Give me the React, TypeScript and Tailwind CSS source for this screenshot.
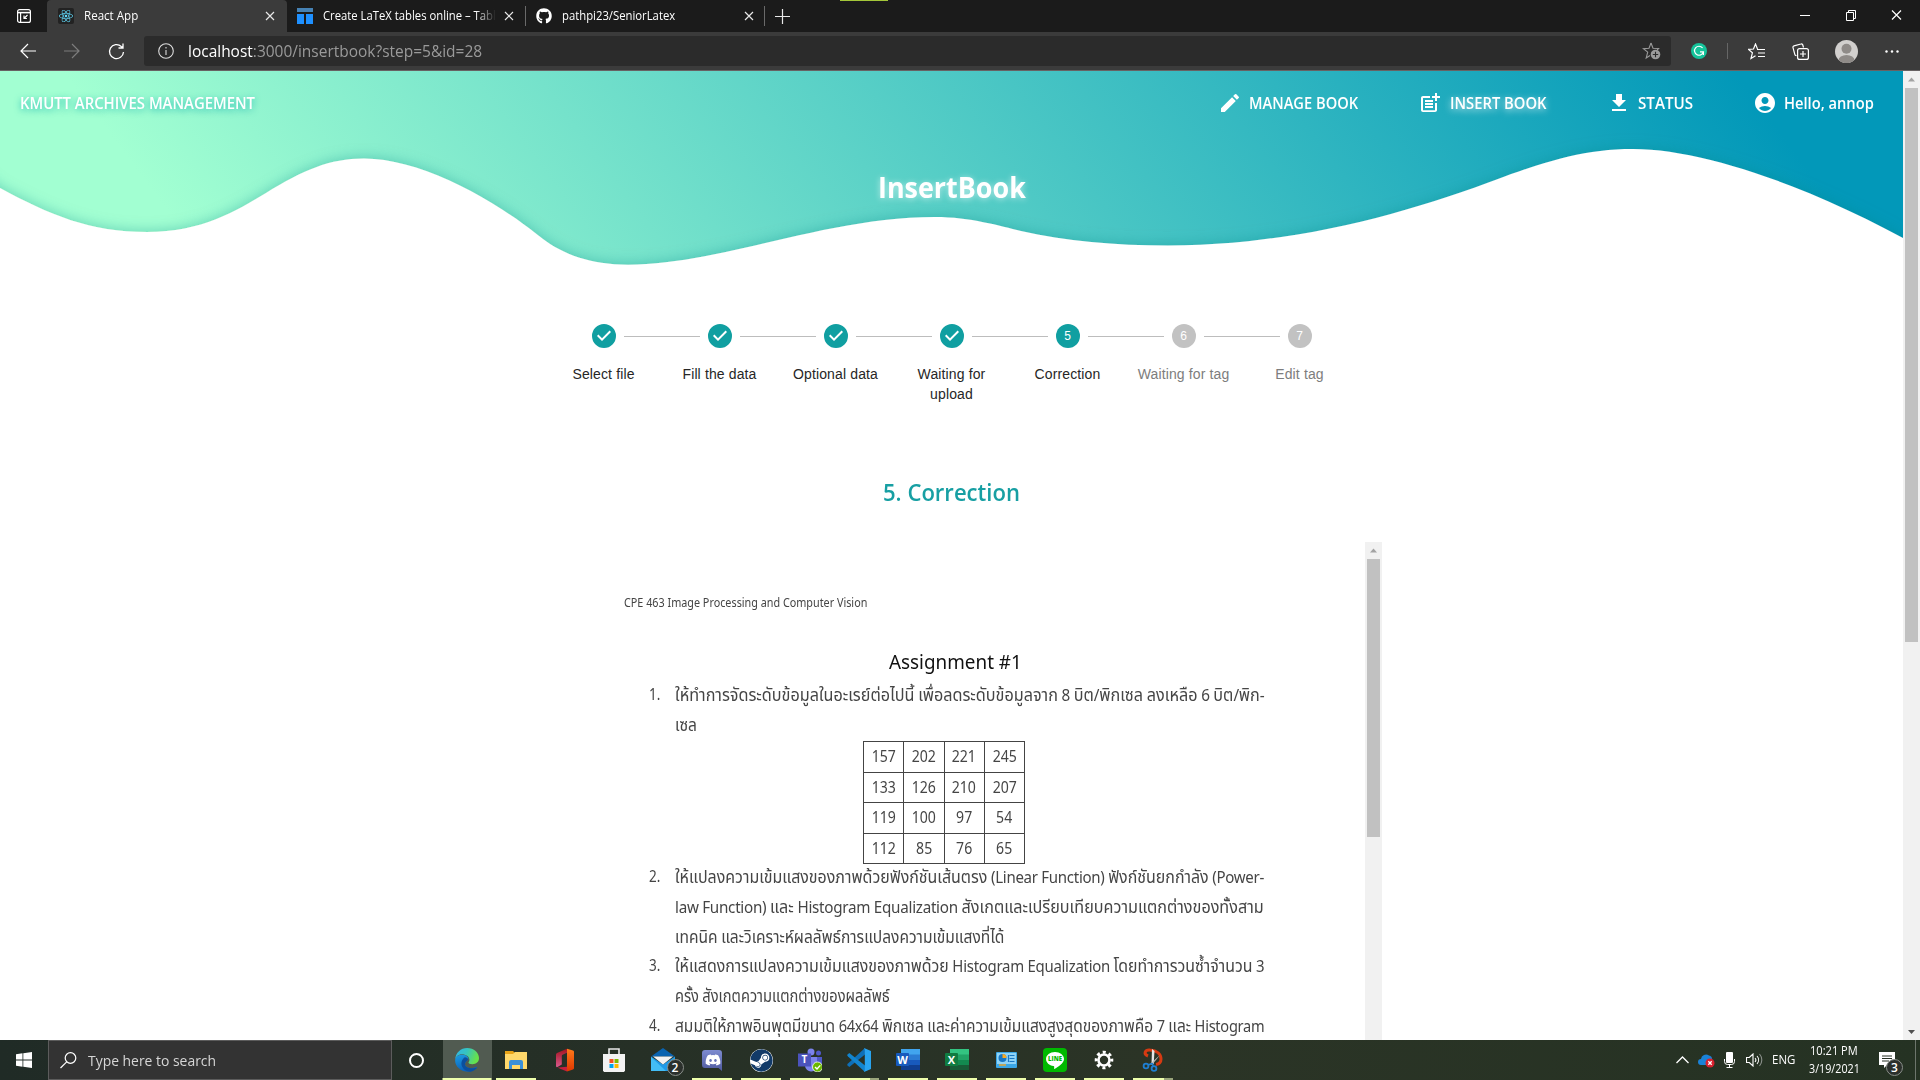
import { useLayoutEffect, useRef, useState } from "react";
import type { ReactNode } from "react";
import { MdEdit, MdPostAdd, MdGetApp, MdAccountCircle } from "react-icons/md";
import { FaGithub, FaReact, FaDiscord, FaSteam } from "react-icons/fa";

/* One line of text stretched to an exact width. */
function Fit({ w, children, className = "" }: { w: number; children: ReactNode; className?: string }) {
  const ref = useRef<HTMLSpanElement>(null);
  const [scale, setScale] = useState(1);
  useLayoutEffect(() => {
    if (ref.current && ref.current.offsetWidth) setScale(w / ref.current.offsetWidth);
  }, [w]);
  return (
    <span className={`block shrink-0 ${className}`} style={{ width: w }}>
      <span ref={ref} className="inline-block origin-left whitespace-nowrap" style={{ transform: `scaleX(${scale})` }}>
        {children}
      </span>
    </span>
  );
}

function Close({ className = "" }: { className?: string }) {
  return (
    <svg className={`h-[10px] w-[10px] shrink-0 ${className}`} viewBox="0 0 10 10" stroke="#e8e8e8" strokeWidth="1.2">
      <path d="M1 1l8 8M9 1l-8 8" />
    </svg>
  );
}

function TabStrip() {
  return (
    <div className="flex h-8 items-center bg-[#1b1b1b] text-[12px] leading-8 text-white">
      <svg className="ml-4 h-4 w-4 shrink-0" viewBox="0 0 16 16" fill="none" stroke="#fff" strokeWidth="1.2">
        <rect x="1.6" y="1.6" width="12.8" height="12.8" rx="2" />
        <path d="M1.6 4.6h12.8" strokeWidth="1.6" />
        <path d="M4.6 4v10" />
        <path d="M11.5 7L8 10.5M8 7.6v2.9h2.9" />
      </svg>
      <div className="ml-[15px] flex h-8 w-[240px] items-center rounded-t-[4px] bg-[#3b3b3b]">
        <span className="ml-[11px] flex h-4 w-4 items-center justify-center rounded-[2px] bg-[#222]">
          <FaReact className="h-[14px] w-[14px] text-[#61dafb]" />
        </span>
        <Fit w={54} className="ml-[10px]">React App</Fit>
        <Close className="ml-[127px]" />
      </div>
      <svg className="ml-[10px] h-4 w-4 shrink-0" viewBox="0 0 16 16">
        <path fill="#4682b4" d="M0 0h16v4H0z" />
        <path fill="#1e90ff" d="M0 6h7v10H0zM9 6h7v10H9z" />
      </svg>
      <div className="relative ml-[10px] w-[173px] overflow-hidden">
        <Fit w={173}>Create LaTeX tables online – Tabl</Fit>
        <span className="absolute inset-y-0 right-0 w-5 bg-linear-to-r from-transparent to-[#1b1b1b]" />
      </div>
      <Close className="ml-[8px]" />
      <span className="ml-[11px] h-5 w-px bg-[#6a6a6a]" />
      <FaGithub className="ml-[10px] h-4 w-4 shrink-0" />
      <Fit w={113} className="ml-[10px]">pathpi23/SeniorLatex</Fit>
      <Close className="ml-[69px]" />
      <span className="ml-[10px] h-5 w-px bg-[#6a6a6a]" />
      <svg className="ml-[10px] h-[15px] w-[15px]" viewBox="0 0 15 15" stroke="#e8e8e8" strokeWidth="1.2">
        <path d="M7.5 0v15M0 7.5h15" />
      </svg>
      <span className="ml-[50px] h-[1px] w-12 self-start bg-[#a4c639]" />
      <svg className="mr-[17px] mb-[3px] ml-auto h-[12px] w-[104px]" viewBox="0 0 104 12" fill="none" stroke="#fff" strokeWidth="1">
        <path d="M1 6.5h10" />
        <path d="M47.500 3.500h7v8h-7zM49.500 3.500v-2h7v8h-2" />
        <path d="M93 1.500l9 9M102 1.500l-9 9" strokeWidth="1.2" />
      </svg>
    </div>
  );
}

function Toolbar() {
  return (
    <div className="flex h-[39px] items-center border-b border-[#676263] bg-[#3b3b3b]">
      <svg className="ml-5 h-4 w-4 shrink-0" viewBox="0 0 16 16" fill="none" stroke="#fff" strokeWidth="1.2">
        <path d="M16 8H1M8 1L1 8l7 7" />
      </svg>
      <svg className="ml-7 h-4 w-4 shrink-0" viewBox="0 0 16 16" fill="none" stroke="#7d7d7d" strokeWidth="1.2">
        <path d="M0 8h15M8 1l7 7-7 7" />
      </svg>
      <svg className="ml-7 h-[17px] w-[17px] shrink-0" viewBox="0 0 17 17" fill="none" stroke="#fff" strokeWidth="1.3">
        <path d="M15.500 9a7 7 0 1 1-2.200-5.500L15 5M15 0.500V5h-4.500" />
      </svg>
      <div className="ml-[19px] flex h-[30px] w-[1527px] items-center rounded-[3px] bg-[#2b2b2b] text-[16px] leading-[30px]">
        <svg className="ml-[14px] h-4 w-4 shrink-0" viewBox="0 0 16 16" fill="none" stroke="#ddd" strokeWidth="1.1">
          <circle cx="8" cy="8" r="7.300" />
          <path d="M8 7v5M8 4v1.500" />
        </svg>
        <Fit w={294} className="ml-[14px] text-[#9a9a9a]">
          <span className="text-white">localhost</span>:3000/insertbook?step=5&amp;id=28
        </Fit>
        <svg className="ml-auto mr-[10px] h-[18px] w-[19px] shrink-0" viewBox="0 0 19 18" fill="none" stroke="#9a9a9a" strokeWidth="1.1">
          <path d="M9 1l2 5.200 5.600.3-1.500 1.500M9 1L7 6.200l-5.600.4 4.300 3.600L4.200 16 8 13.500" />
          <circle cx="13.500" cy="12.500" r="4.800" fill="#9a9a9a" stroke="none" />
          <path d="M13.500 9.800v5.400M10.800 12.500h5.400" stroke="#2b2b2b" />
        </svg>
      </div>
      <svg className="ml-5 h-4 w-4 shrink-0" viewBox="0 0 16 16" fill="none" stroke="#fff" strokeWidth="1.200">
        <circle cx="8" cy="8" r="8" fill="#15c39a" stroke="none" />
        <path d="M11.600 5A4.500 4.500 0 1 0 12.400 8.800H9M12.400 8.800V12" />
      </svg>
      <span className="ml-5 h-4 w-px bg-[#666]" />
      <svg className="ml-5 h-[17px] w-[17px] shrink-0" viewBox="0 0 17 17" fill="none" stroke="#fff" strokeWidth="1.200">
        <path d="M9.500 6L7.500 1 5.500 6l-5 .4 3.900 3.400L3 15.500l4.500-2.800M9 6.500h8M10 10h7M10 13.500h7" />
      </svg>
      <svg className="ml-[27px] h-[17px] w-[17px] shrink-0" viewBox="0 0 17 17" fill="none" stroke="#fff" strokeWidth="1.200">
        <path d="M11.500 4.500L10.800 2a1.500 1.500 0 0 0-1.900-1L2 2.900A1.500 1.500 0 0 0 1 4.700l1.800 6.700a1.500 1.500 0 0 0 1.700 1.100" />
        <rect x="5.600" y="5.600" width="10.800" height="10.800" rx="2" />
        <path d="M11 8v6M8 11h6" />
      </svg>
      <svg className="ml-[26px] h-[23px] w-[23px] shrink-0" viewBox="0 0 23 23">
        <clipPath id="avatar"><circle cx="11.500" cy="11.500" r="11.500" /></clipPath>
        <g clipPath="url(#avatar)">
          <path fill="#d2d0ce" d="M0 0h23v23H0z" />
          <circle cx="11.500" cy="8.800" r="5" fill="#8f8b88" />
          <ellipse cx="11.500" cy="20.500" rx="8" ry="5.500" fill="#8f8b88" />
        </g>
      </svg>
      <svg className="ml-[27px] h-[3px] w-[14px]" viewBox="0 0 14 3" fill="#fff">
        <circle cx="1.500" cy="1.500" r="1.200" /><circle cx="7" cy="1.500" r="1.200" /><circle cx="12.500" cy="1.500" r="1.200" />
      </svg>
    </div>
  );
}

function Waves() {
  return (
    <svg className="absolute inset-x-0 top-0 h-[230px] w-[1903px]" viewBox="0 71 1903 230">
      <defs>
        <linearGradient id="sea" gradientUnits="userSpaceOnUse" x1="5.6" y1="-4.2" x2="1076" y2="-807">
          <stop offset="0" stopColor="#a2ffd2" />
          <stop offset="1" stopColor="#0298b9" />
        </linearGradient>
        <filter id="shade" x="-5%" y="-30%" width="110%" height="160%">
          <feDropShadow dx="0" dy="-1" stdDeviation="7" floodColor="#108888" floodOpacity="0.36" />
        </filter>
      </defs>
      <path fill="url(#sea)" d="M0 71h1903v230H0z" />
      <path
        filter="url(#shade)"
        fill="#fff"
        d="M-60 140L0 188C50 215 90 232 147 232C202 232 236 211 266 193C303 170 330 158.500 364 158.500C420 158.500 493 198 543 239C563 254 590 264.700 628 264.700C720 264.700 825 217 935 217C970 217 1000 226 1021 231C1065 241 1115 245.500 1168 245.500C1290 245.500 1400 215 1487 183C1543 162 1583 149 1633 149C1702 149 1805 185 1903 238L1970 280V340H-60z"
      />
    </svg>
  );
}

const navText = "text-[16px] font-semibold leading-6 text-white";

function NavBar() {
  return (
    <div className="relative flex h-16 items-center text-white">
      <Fit w={235} className={`ml-5 ${navText} [text-shadow:0_2px_8px_#0aac]`}>KMUTT ARCHIVES MANAGEMENT</Fit>
      <MdEdit className="ml-[963px] h-6 w-6 shrink-0" />
      <Fit w={109} className={`ml-[7px] ${navText}`}>MANAGE BOOK</Fit>
      <MdPostAdd className="ml-[60px] h-6 w-6 shrink-0" />
      <Fit w={97} className={`ml-2 ${navText} [text-shadow:0_2px_8px_#fffc]`}>INSERT BOOK</Fit>
      <MdGetApp className="ml-[60px] h-6 w-6 shrink-0" />
      <Fit w={55} className={`ml-[7px] ${navText}`}>STATUS</Fit>
      <MdAccountCircle className="ml-[60px] h-6 w-6 shrink-0" />
      <Fit w={90} className={`ml-[7px] ${navText}`}>Hello, annop</Fit>
    </div>
  );
}

const steps = ["Select file", "Fill the data", "Optional data", "Waiting for upload", "Correction", "Waiting for tag", "Edit tag"];

function Stepper() {
  return (
    <div className="mx-auto flex w-[812px] font-['Liberation_Sans',sans-serif]">
      {steps.map((label, i) => (
        <div key={label} className="relative flex w-[116px] flex-col items-center px-2">
          {i > 0 && <span className="absolute top-3 right-[78px] left-[-38px] h-px bg-[#bdbdbd]" />}
          {i < 4 ? (
            <svg className="h-6 w-6" viewBox="0 0 24 24" fill="#109fa1">
              <path d="M12 0a12 12 0 1 0 0 24 12 12 0 0 0 0-24zm-2 17l-5-5 1.400-1.400 3.600 3.600 7.600-7.600L19 8l-9 9z" />
            </svg>
          ) : (
            <span className={`flex h-6 w-6 items-center justify-center rounded-full text-[12px] leading-none text-white ${i === 4 ? "bg-[#109fa1]" : "bg-[#c2c2c2]"}`}>
              {i + 1}
            </span>
          )}
          <span className={`mt-4 text-center text-[14px] leading-5 tracking-[0.00938em] ${i > 4 ? "text-[#7d7d7d]" : "text-[#262626]"}`}>{label}</span>
        </div>
      ))}
    </div>
  );
}

const grid = [
  ["157", "202", "221", "245"],
  ["133", "126", "210", "207"],
  ["119", "100", "97", "54"],
  ["112", "85", "76", "65"],
];

/* Thai runs are set a size larger than the Latin ones around them. */
function Mixed({ text }: { text: string }) {
  return (
    <>
      {text.split(/([\u0e00-\u0e7f]+)/).map((run, i) =>
        i % 2 ? (
          <span key={i} className="text-[17px]">{run}</span>
        ) : (
          <span key={i} className="tracking-[-0.3px]">{run}</span>
        ),
      )}
    </>
  );
}

function Item({ n, lines }: { n: number; lines: [string, number][] }) {
  return (
    <div className="flex text-[16px] leading-[29.7px]">
      <span className="w-[26px] shrink-0"><Fit w={11}>{n}.</Fit></span>
      <div>
        {lines.map(([text, w]) => (
          <Fit key={text} w={w} className="h-[29.7px]"><Mixed text={text} /></Fit>
        ))}
      </div>
    </div>
  );
}

function Doc() {
  return (
    <div className="flex h-[498px] w-[765px] flex-col overflow-hidden pl-[49px] font-['Noto_Sans','Noto_Sans_Thai','Loma','Garuda',sans-serif] text-[#454545]">
      <Fit w={243} className="mt-[51px] -ml-[25px] text-[12px] leading-5">CPE 463 Image Processing and Computer Vision</Fit>
      <Fit w={133} className="mt-[34px] ml-[240px] text-[19px] leading-[30px] text-[#111]">Assignment #1</Fit>
      <div className="mt-[3px]">
        <Item n={1} lines={[["ให้ทำการจัดระดับข้อมูลในอะเรย์ต่อไปนี้ เพื่อลดระดับข้อมูลจาก 8 บิต/พิกเซล ลงเหลือ 6 บิต/พิก-", 589], ["เซล", 22]]} />
      </div>
      <table className="mt-[2px] ml-[214px] w-[162px] shrink-0 table-fixed border-collapse text-center text-[16px] leading-[28px]">
        <tbody>
          {grid.map((row, r) => (
            <tr key={r} className="h-[30.500px] align-top">
              {row.map((cell, c) => (
                <td key={c} className="border border-[#444] p-0">
                  <span className="inline-block scale-x-[0.88]">{cell}</span>
                </td>
              ))}
            </tr>
          ))}
        </tbody>
      </table>
      <div className="-mt-[2px]">
        <Item
          n={2}
          lines={[
            ["ให้แปลงความเข้มแสงของภาพด้วยฟังก์ชันเส้นตรง (Linear Function) ฟังก์ชันยกกำลัง (Power-", 589],
            ["law Function) และ Histogram Equalization สังเกตและเปรียบเทียบความแตกต่างของทั้งสาม", 589],
            ["เทคนิค และวิเคราะห์ผลลัพธ์การแปลงความเข้มแสงที่ได้", 329],
          ]}
        />
        <Item
          n={3}
          lines={[
            ["ให้แสดงการแปลงความเข้มแสงของภาพด้วย Histogram Equalization โดยทำการวนซ้ำจำนวน 3", 589],
            ["ครั้ง สังเกตความแตกต่างของผลลัพธ์", 215],
          ]}
        />
        <Item n={4} lines={[["สมมติให้ภาพอินพุตมีขนาด 64x64 พิกเซล และค่าความเข้มแสงสูงสุดของภาพคือ 7 และ Histogram", 589]]} />
      </div>
    </div>
  );
}

function Arrow({ down = false, fill }: { down?: boolean; fill: string }) {
  return (
    <svg className="h-[17px] w-[17px] shrink-0" viewBox="0 0 17 17" fill={fill}>
      <path d={down ? "M5 7h7l-3.500 4z" : "M5 10.500h7L8.500 6.500z"} />
    </svg>
  );
}

function Page() {
  return (
    <div className="flex h-[969px] bg-white">
      <div className="relative flex w-[1903px] flex-col">
        <Waves />
        <NavBar />
        <div className="relative flex h-[189px] justify-center pt-[32px] text-white">
          <Fit w={148} className="text-[28px] font-bold leading-[40px] [text-shadow:0_1px_6px_#fff9]">InsertBook</Fit>
        </div>
        <Stepper />
        <div className="mt-[70px] flex justify-center">
          <Fit w={137} className="text-[24px] font-semibold leading-9 text-[#179fa3]">5. Correction</Fit>
        </div>
        <div className="mt-auto ml-[600px] flex h-[498px]">
          <Doc />
          <div className="flex w-[17px] flex-col items-center bg-[#f1f1f1]">
            <Arrow fill="#a3a3a3" />
            <span className="h-[278px] w-[13px] bg-[#c1c1c1]" />
          </div>
        </div>
      </div>
      <div className="flex w-[17px] flex-col items-center bg-[#f1f1f1]">
        <Arrow fill="#a3a3a3" />
        <span className="h-[554px] w-[13px] bg-[#c1c1c1]" />
        <span className="mt-auto"><Arrow down fill="#505050" /></span>
      </div>
    </div>
  );
}

function Slot({ children, bar = "w-10", active = false, more = false }: { children: ReactNode; bar?: string; active?: boolean; more?: boolean }) {
  return (
    <div className={`relative flex h-10 w-[49px] shrink-0 items-center justify-center ${active ? "bg-[#515b51]" : ""}`}>
      {children}
      {bar && (
        <span className={`absolute bottom-0 left-1/2 flex h-[2px] -translate-x-1/2 justify-end bg-[#eeffac] ${bar}`}>
          {more && <span className="h-full w-[9px] bg-[#9aa67c]" />}
        </span>
      )}
    </div>
  );
}

function Badge({ n, className }: { n: number; className: string }) {
  return (
    <span className={`absolute flex h-[17px] w-[17px] items-center justify-center rounded-full border border-[#8a8f8a] bg-[#2b302c] text-[12px] font-semibold leading-none text-white ${className}`}>
      {n}
    </span>
  );
}

function OfficeSheet({ letter, c }: { letter: string; c: [string, string, string, string, string] }) {
  return (
    <span className="relative h-6 w-6">
      <svg className="h-6 w-6" viewBox="0 0 24 24">
        <path fill={c[0]} d="M5 1h19v6H5z" />
        <path fill={c[1]} d="M5 6.500h19V12H5z" />
        <path fill={c[2]} d="M5 12h19v5H5z" />
        <path fill={c[3]} d="M5 17h19v5H5z" />
        <rect y="5" width="13" height="13" rx="1" fill={c[4]} />
      </svg>
      <span className="absolute top-[5px] left-0 w-[13px] text-center text-[11px] font-bold leading-[13px] text-white">{letter}</span>
    </span>
  );
}

function Taskbar() {
  return (
    <div className="flex h-10 items-center bg-linear-to-r from-[#202b26] via-[#2b3426] via-60% to-[#253223] text-white">
      <svg className="ml-4 h-4 w-4 shrink-0" viewBox="0 0 16 16" fill="#fff">
        <path d="M0 2.200l6.500-.9v6.300H0zM7.300 1.200L16 0v7.600H7.300zM0 8.400h6.500v6.300L0 13.800zM7.300 8.400H16V16l-8.700-1.200z" />
      </svg>
      <div className="ml-4 flex h-10 w-[344px] items-center border border-[#5c5c5c] bg-[#333] text-[15px] leading-[38px] text-[#d6d6d6]">
        <svg className="ml-[11px] h-[17px] w-[17px]" viewBox="0 0 17 17" fill="none" stroke="#fff" strokeWidth="1.200">
          <circle cx="10.500" cy="6" r="5.300" /><path d="M6.700 9.800L.5 16" />
        </svg>
        <Fit w={128} className="ml-[11px]">Type here to search</Fit>
      </div>
      <div className="flex w-[50.500px] justify-center pr-[2px]">
        <span className="h-[15px] w-[15px] rounded-full border-2 border-white" />
      </div>
      <Slot active bar="w-[49px]">
        <svg className="h-6 w-6" viewBox="0 0 256 256">
          <defs>
            <linearGradient id="e1" x1="0" x2="1" y1="0" y2="0.300"><stop offset="0" stopColor="#2fb5ea" /><stop offset="0.500" stopColor="#36c3c0" /><stop offset="1" stopColor="#66e24b" /></linearGradient>
            <linearGradient id="e2" x1="0" x2="0.300" y1="0" y2="1"><stop offset="0" stopColor="#1b9de2" /><stop offset="1" stopColor="#0b5fb8" /></linearGradient>
          </defs>
          <path fill="url(#e2)" d="M3 118c6-34 48-52 86-46 36 6 62 32 52 50-4 8-34 20-34 52 0 28 38 46 76 40 30-4 46-16 52-12 5 4-22 34-60 46C90 272-12 204 3 118z" />
          <path fill="#0c4f9e" d="M105 98c-30 22-46 60-30 98 14 32 48 54 88 56 28-2 60-22 74-44-6-4-22 8-54 8-44 0-76-18-76-44 0-30 30-40 33-50-4-14-16-24-35-24z" />
          <path fill="url(#e1)" d="M3 122C6 50 62 0 130 0c72 0 126 52 126 106 0 42-32 66-70 66-28 0-44-10-42-18 2-6 10-10 10-28 0-36-40-60-80-60-38 0-66 26-71 56z" />
        </svg>
      </Slot>
      <Slot>
        <svg className="h-6 w-6" viewBox="0 0 24 24">
          <path fill="#e8a317" d="M1 3h8l2 2v2H1z" /><path fill="#ffd86b" d="M1 6h8l2-2h12v17H1z" />
          <path fill="#3a8fd8" d="M5 21v-7a2 2 0 0 1 2-2h10a2 2 0 0 1 2 2v7h-3v-4H8v4z" />
        </svg>
      </Slot>
      <Slot bar="">
        <svg className="h-6 w-6" viewBox="0 0 24 24">
          <defs>
            <linearGradient id="o1" x1="0" x2="0" y1="0" y2="1"><stop offset="0" stopColor="#a3131f" /><stop offset="1" stopColor="#d9588c" /></linearGradient>
            <linearGradient id="o2" x1="0" x2="0" y1="0" y2="1"><stop offset="0" stopColor="#ff7a1a" /><stop offset="1" stopColor="#dd3600" /></linearGradient>
          </defs>
          <path fill="url(#o1)" d="M3 6.500Q3 5.500 4 5L14 .800v4L9.500 6.700Q8.800 7 8.800 8v8.500L4.500 19Q3 19.500 3 18z" />
          <path fill="#c41f3e" d="M5 19.500l9-.8v4.800L6 20.300Q5.300 20 5 19.500z" />
          <path fill="url(#o2)" d="M14 .800l6 1.700q1 .3 1 1.300v16.500q0 1-1 1.300l-6 1.900z" />
        </svg>
      </Slot>
      <Slot bar="">
        <svg className="h-6 w-6" viewBox="0 0 24 24">
          <path fill="none" stroke="#e8e8e8" strokeWidth="1.600" d="M7 7V1h10v6" /><path fill="#f3f3f3" d="M1 6h22v16.500l-1 1.500H2l-1-1.500z" />
          <path fill="#f25022" d="M7.500 11h4v4h-4z" /><path fill="#7fba00" d="M12.500 11h4v4h-4z" />
          <path fill="#00a4ef" d="M7.500 16h4v4h-4z" /><path fill="#ffb900" d="M12.500 16h4v4h-4z" />
        </svg>
      </Slot>
      <Slot bar="">
        <svg className="h-6 w-6" viewBox="0 0 24 24">
          <path fill="#0a63b0" d="M0 8.500L12 0l12 8.500z" />
          <path fill="#1f9ae8" d="M0 8.500l12 8 12-8V23H0z" /><path fill="#f2f2f2" d="M2 8.500h20l-10 8z" /><path fill="#43bdf5" d="M0 23V9l15 14z" />
        </svg>
        <Badge n={2} className="top-[19px] left-[28px]" />
      </Slot>
      <Slot>
        <svg className="h-6 w-6" viewBox="0 0 24 24">
          <defs><linearGradient id="dc" x1="0" x2="0" y1="0" y2="1"><stop offset="0" stopColor="#7d8bd0" /><stop offset="1" stopColor="#4f5a9e" /></linearGradient></defs>
          <path fill="url(#dc)" d="M5 2h14a3 3 0 0 1 3 3v18l-3.500-3H5a3 3 0 0 1-3-3V5a3 3 0 0 1 3-3z" />
          <FaDiscord x="5" y="4" width="14" height="14" />
        </svg>
      </Slot>
      <Slot>
        <FaSteam className="h-[23px] w-[23px] rounded-full bg-white text-[#123a68]" />
      </Slot>
      <Slot>
        <span className="relative h-6 w-6">
          <svg className="h-6 w-6" viewBox="0 0 24 24">
            <circle cx="13" cy="4" r="3.500" fill="#7b83eb" /><circle cx="20.500" cy="5" r="2.500" fill="#5059c9" />
            <path fill="#5059c9" d="M17 9h7v7a4 4 0 0 1-7 2z" /><path fill="#7b83eb" d="M7 9h12v8a6 6 0 0 1-12 1z" />
            <path fill="#4b53bc" d="M0 5.500h13v13H0z" />
            <circle cx="19.500" cy="19" r="5" fill="#6bb700" stroke="#fff" strokeWidth="0.800" />
            <path fill="none" stroke="#fff" strokeWidth="1.400" d="M17 19l2 2 3.300-3.600" />
          </svg>
          <span className="absolute top-[5px] left-0 w-[13px] text-center text-[10px] font-bold leading-[13px]">T</span>
        </span>
      </Slot>
      <Slot more>
        <svg className="h-6 w-6" viewBox="0 0 24 24">
          <path fill="#0e70b8" d="M18 0L1 15.500 0 17l2.300 2L18 6.500z" /><path fill="#1285cf" d="M18 24L1 8.500 0 7l2.300-2L18 17.500z" />
          <path fill="#29a4ef" d="M17 0l7 3v18l-7 3 .8-1.500V1.500z" />
        </svg>
      </Slot>
      <Slot><OfficeSheet letter="W" c={["#41a5ee", "#2b7cd3", "#185abd", "#103f91", "#185abd"]} /></Slot>
      <Slot><OfficeSheet letter="X" c={["#33c481", "#21a366", "#138a50", "#185c37", "#107c41"]} /></Slot>
      <Slot>
        <svg className="h-4 w-[21px]" viewBox="0 0 21 16">
          <rect width="21" height="16" rx="1" fill="#3ba7e6" /><path fill="#8ed3f7" d="M1 1h19v11H1z" />
          <circle cx="6.500" cy="6" r="4" fill="#1776c4" /><path fill="#f7a823" d="M6.500 6V2a4 4 0 0 1 4 4z" />
          <path stroke="#1776c4" strokeWidth="1.200" d="M13.500 3.500h5M13.500 6.500h5M13.500 9.500h5M12.500 3v7" /><path stroke="#f7a823" strokeWidth="1.400" d="M3 13h7" />
        </svg>
      </Slot>
      <Slot>
        <span className="relative flex h-6 w-6 items-center justify-center rounded-[4px] bg-[#00b900]">
          <svg className="absolute inset-0 h-6 w-6" viewBox="0 0 24 24" fill="#fff">
            <path d="M12 4c-5 0-9 3.200-9 7.100 0 3.500 3.200 6.500 7.500 7 .9.200.8.800.6 2.400 0 .5.300.5.800.2C15 19 21 15.500 21 11.100 21 7.200 17 4 12 4z" />
          </svg>
          <span className="relative mb-[2px] text-[6px] leading-none font-extrabold text-[#00b900]">LINE</span>
        </span>
      </Slot>
      <Slot>
        <svg className="h-6 w-6" viewBox="0 0 24 24" fill="none" stroke="#fff">
          <circle cx="12" cy="12" r="5.500" strokeWidth="2.600" />
          <circle cx="12" cy="12" r="7.800" strokeWidth="3" strokeDasharray="3.063 3.063" strokeDashoffset="1.530" />
        </svg>
      </Slot>
      <Slot more>
        <svg className="h-6 w-6" viewBox="0 0 24 24" fill="none">
          <path stroke="#d63a12" strokeWidth="3" d="M7 8C2 6 4 1.500 9 2c7 .5 11 4 11 9 0 3-2 5-5 5.500" />
          <path fill="#e6e6e6" d="M11 1l2.500 2-.8 13-2.200.5z" /><path fill="#b8b8b8" d="M19 7l-8 10-1.500-1.500z" />
          <circle cx="5" cy="18" r="2.400" stroke="#1f7fd1" strokeWidth="1.800" /><circle cx="13" cy="20.500" r="2.400" stroke="#1f7fd1" strokeWidth="1.800" />
          <path stroke="#1f7fd1" strokeWidth="1.500" d="M7 17l4-1.500M12 18l-.5-3" />
        </svg>
      </Slot>
      <svg className="ml-auto h-[8px] w-[13px]" viewBox="0 0 13 8" fill="none" stroke="#fff" strokeWidth="1.300"><path d="M.5 7l6-6 6 6" /></svg>
      <svg className="mt-[2px] ml-[9px] h-[14px] w-[17px]" viewBox="0 0 17 14">
        <path fill="#1a82d8" d="M3 11a3 3 0 0 1 0-6 5 5 0 0 1 8-3.500A4 4 0 0 1 14 6v5z" /><circle cx="12" cy="9" r="4.500" fill="#d9202e" />
        <path stroke="#fff" strokeWidth="1.300" d="M10.300 7.300l3.400 3.400M13.700 7.300l-3.400 3.400" />
      </svg>
      <svg className="ml-[9px] h-[16px] w-[11px]" viewBox="0 0 11 16" fill="none" stroke="#fff">
        <rect x="2" y="0" width="7" height="11" rx="1" fill="#fff" stroke="none" /><path d="M.5 7v2.500a3 3 0 0 0 3 3h4a3 3 0 0 0 3-3V7M5.500 12.500V15M2.500 15.500h6" />
      </svg>
      <svg className="ml-[11px] h-[14px] w-[17px]" viewBox="0 0 17 14" fill="none" stroke="#fff" strokeWidth="1.100">
        <path d="M.5 4.500h2.800L7 1v12L3.300 9.500H.5zM9 5a3 3 0 0 1 0 4M11 3a6 6 0 0 1 0 8" /><path stroke="#8a8f8a" d="M13.500 1a9 9 0 0 1 0 12" />
      </svg>
      <Fit w={23} className="ml-[9px] text-[12px] leading-[38px]">ENG</Fit>
      <div className="ml-[13px] flex w-[52px] flex-col items-center text-[12px] leading-[18px]">
        <Fit w={48}>10:21 PM</Fit>
        <Fit w={51}>3/19/2021</Fit>
      </div>
      <div className="relative ml-[19px] h-4 w-4">
        <svg className="h-4 w-4" viewBox="0 0 16 16"><path fill="#fff" d="M0 0h16v13H8l-3 3v-3H0z" /><path stroke="#263024" d="M3 4h10M3 6.500h10M3 9h7" /></svg>
        <Badge n={3} className="top-[7px] left-[7px]" />
      </div>
      <span className="mr-1 ml-5 h-10 w-px bg-[#6d756c]" />
    </div>
  );
}

export default function App() {
  return (
    <div className="flex h-[1080px] w-[1920px] flex-col overflow-hidden bg-white font-['Open_Sans','Noto_Sans',sans-serif]">
      <TabStrip />
      <Toolbar />
      <Page />
      <Taskbar />
    </div>
  );
}
